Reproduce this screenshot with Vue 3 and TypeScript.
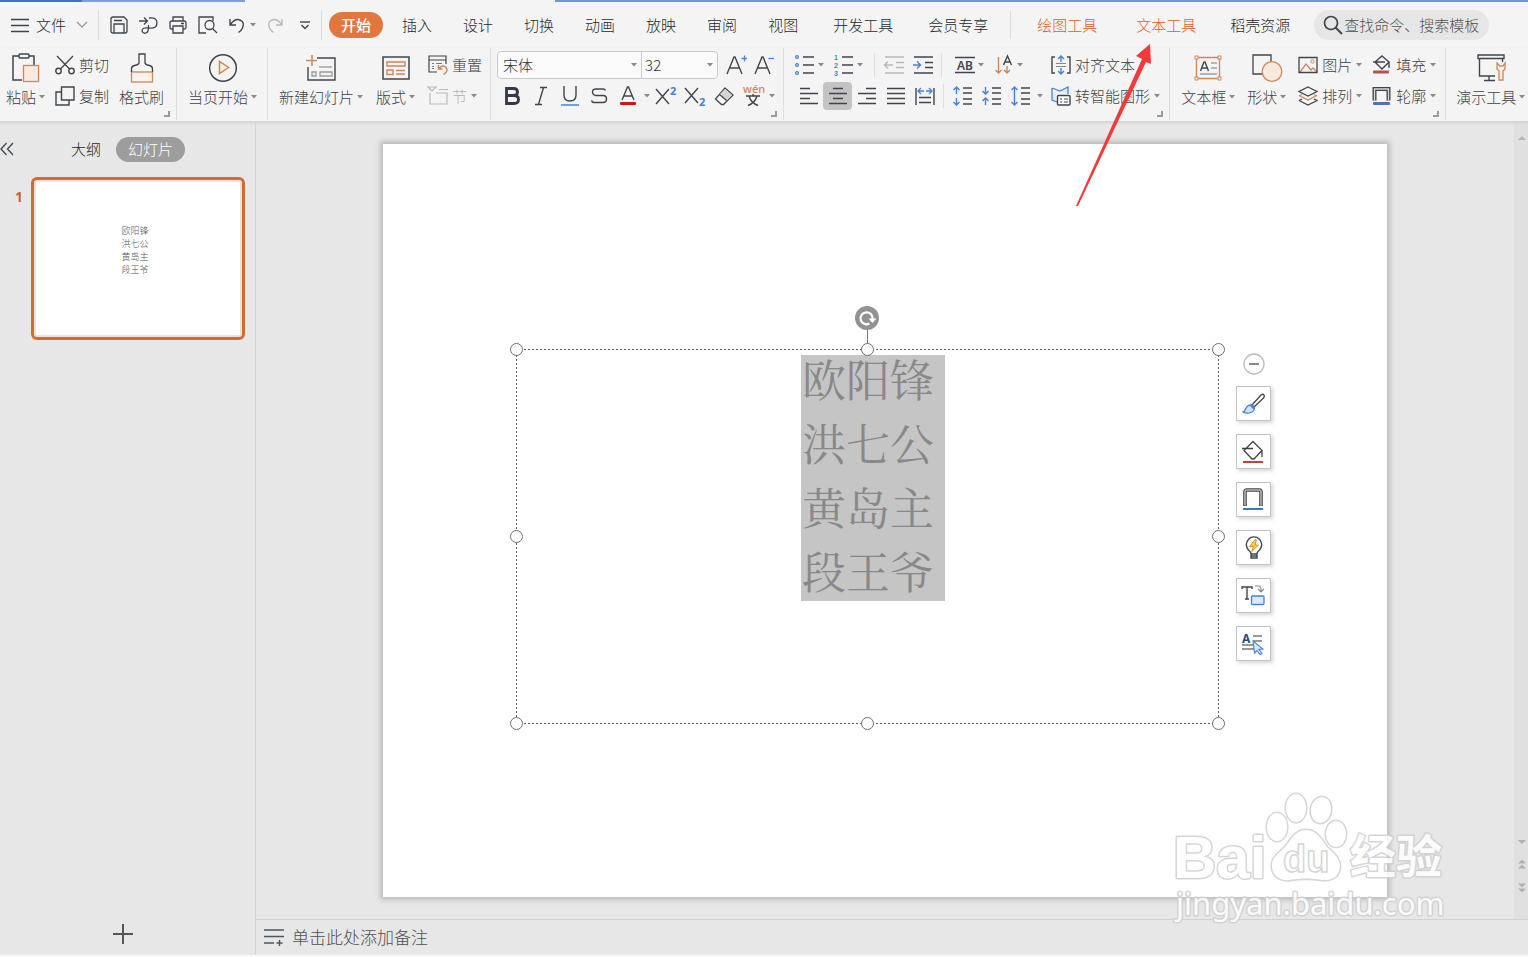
<script setup lang="ts">
import { h } from 'vue'

type IconDef = [number, number, string]

const K = '#40454d'
const O = '#d08658'
const B = '#4583d6'
const G = '#b9b9b9'

const line = (d: string, c = K, w = 1.5, fill = 'none') =>
  `<path d="${d}" stroke="${c}" stroke-width="${w}" fill="${fill}"/>`
const glyph = (t: string, x: number, y: number, size: number, c = K, extra = '') =>
  `<text x="${x}" y="${y}" font-size="${size}" fill="${c}" font-family="Noto Sans, Noto Sans CJK SC, sans-serif" ${extra}>${t}</text>`
const digit = (t: string, y: number) =>
  `<text x="0" y="${y}" font-size="7" font-weight="700" fill="${B}" font-family="Liberation Sans, sans-serif">${t}</text>`

const icons: Record<string, IconDef> = {
  menu: [18, 18, line('M0 3.500h18M0 9.500h18M0 15.500h18', K, 1.3)],
  chevron: [12, 8, line('M1 1l5 5 5-5', '#999', 1.3)],
  save: [18, 18, line('M3 1h11l3 3v11q0 2-2 2H3q-2 0-2-2V3q0-2 2-2zM4 17V8h10v9M4 4.5h8', K, 1.3)],
  share: [19, 18, line('M0 5h8M5 1.5L8.5 5 5 8.5M10 2q8-1 8 5t-8 5q-7-1-7 3 1 3 4 2 3-1 2.500-8', K, 1.3)],
  print: [18, 18, line('M4 5V1h10v4M4 13H2.500Q1 13 1 11.500V7q0-2 2-2h12q2 0 2 2v4.500q0 1.500-1.500 1.500H14M4 10h10v7H4zM12 7.500h3', K, 1.3)],
  preview: [20, 18, line('M8 17H1V1h14v4', K, 1.3) + `<circle cx="11.500" cy="9" r="4.500" stroke="${K}" stroke-width="1.300" fill="none"/>` + line('M14.500 12.500l4.500 4.500', K, 1.3)],
  undo: [16, 16, line('M1 2v6h6M1.500 7.500Q6 1 11 3t2.500 8q-1 2.500-4 4.500', K, 1.4)],
  redo: [16, 16, line('M15 2v6H9M14.500 7.500Q10 1 5 3T2.500 11q1 2.500 4 4.500', G, 1.4)],
  more: [10, 9, line('M0 1h10', K, 1.4) + line('M1.500 4l3.500 3.500L8.500 4', K, 1.4)],
  search: [20, 20, `<circle cx="8" cy="8" r="6.500" stroke="${K}" stroke-width="1.700" fill="none"/>` + line('M12.500 12.500l6.500 6.500', K, 2)],
  paste: [28, 30, line('M10 27H1V3h6M17 3h5v9', K, 1.5) + `<rect x="7" y="1" width="10" height="4" rx="1" stroke="${K}" stroke-width="1.500" fill="#f4f4f4"/><rect x="11.500" y="12.500" width="15" height="16" fill="#fbe9df" stroke="${O}" stroke-width="1.300"/>`],
  cut: [20, 20, line('M2 1l12.500 13M18 1L5.500 14', K, 1.3) + `<circle cx="3.500" cy="16" r="2.700" fill="none" stroke="${K}" stroke-width="1.400"/><circle cx="16.500" cy="16" r="2.700" fill="none" stroke="${K}" stroke-width="1.400"/>`],
  copy: [20, 20, line('M6.500 6H1v13h13v-5', K, 1.4) + line('M6.500 1H19v13H6.500z', K, 1.4)],
  painter: [24, 30, `<rect x="1.500" y="19" width="21" height="10" fill="#fdf0e8" stroke="${O}" stroke-width="1.300"/>` + line('M1.500 19v-3q0-3 3-3.500 4-.5 4.500-2.500V1h6v9q.5 2 4.500 2.500 3 .5 3 3.500v3', K, 1.3)],
  play: [30, 30, `<circle cx="15" cy="15" r="13.300" fill="none" stroke="${K}" stroke-width="1.500"/>` + line('M11.500 8.500v12l9-6z', O, 1.5, '#fdf0e8')],
  newslide: [30, 28, line('M11 4h18v22H2V13', K, 1.4) + line('M6 1v11M0 6.500h11', O, 1.5) + line('M13 13h13', '#9a9a9a', 1.3) + line('M6 18h4v4H6zM14 18h12v4H14z', '#9a9a9a', 1.3)],
  layout: [28, 24, line('M1 1h26v22H1z', K, 1.5) + line('M5 6h18v4H5zM5 14h6v4.500H5zM14 14.500h9M14 18h9', O, 1.4)],
  reset: [20, 20, line('M9 17H1V1h17v8M1 5h17', K, 1.2) + line('M4 8.500h2M8 8.500h6M4 11.500h2M4 13.500h2', '#777', 1.2) + line('M10.500 10v4h4M11 13.500q4-4.500 7-1t-2.500 7', O, 1.4)],
  section: [20, 20, line('M0 1h8L4 5zM11 3.500h9M2 7v11h17V7H8', G, 1.2)],
  fontup: [20, 20, line('M1 19L8 2h1l7 17M3.500 13h10', K, 1.4) + line('M15.500 3.500H21M18.500 .5v6', B, 1.3)],
  fontdown: [20, 20, line('M1 19L8 2h1l7 17M3.500 13h10', K, 1.4) + line('M14.500 3.500H20', B, 1.3)],
  bold: [16, 20, line('M2.500 2.500h7q4 0 4 3.500t-4 3.500h-7zM2.500 9.500h7.500q4.500 0 4.500 4t-4.500 4h-7.500z', '#333a45', 2.8)],
  italic: [14, 20, line('M6 1.500h7M1 18.500h7M9.500 1.500l-5 17', K, 1.4)],
  underline: [18, 20, line('M3 0v9q0 6 6 6t6-6V0', K, 1.4) + line('M0 19h18', B, 1.5)],
  strike: [18, 18, line('M15.500 3.500Q15 2 13 2H6Q2.500 2 2.500 5t3.500 3.500h7q3.500 0 3.500 3.500T13 15.500H4Q2 15.500 1.500 13.500', K, 1.4)],
  color: [18, 20, line('M3 14L8.500 1h1L15 14M5 10h8', K, 1.4) + '<rect x="1" y="16" width="16" height="3" rx="1" fill="#cc1717"/>'],
  sup: [22, 20, line('M1 3l13 15M14 3L1 18', K, 1.4) + glyph('2', 15, 9, 11, B, 'font-weight="700"')],
  sub: [22, 20, line('M1 2l13 15M14 2L1 17', K, 1.4) + glyph('2', 15, 20, 11, B, 'font-weight="700"')],
  eraser: [20, 20, line('M11 2l8 7-9.500 9.500h-2L1.500 13z', K, 1.3, '#fff') + '<path d="M11 3l7 6-5.500 5.500-7-6z" fill="#d5d5d5"/>' + line('M5.500 8.500l7 6', K, 1.3)],
  pinyin: [20, 22, glyph('wén', 0, 8, 11, O, 'font-weight="500"') + line('M3 11h14M10 9v2M6 11q2 7 9 9.500M14 11q-2 7-9 9.500', K, 1.4)],
  bullets: [20, 20, [2, 10, 18].map(y => `<circle cx="2" cy="${y}" r="1.400" fill="none" stroke="${B}" stroke-width="1.300"/>`).join('') + line('M8 2h11M8 10h11M8 18h11', K, 1.4)],
  numbers: [20, 20, digit('1', 5) + digit('2', 13) + digit('3', 21) + line('M8 2h11M8 10h11M8 18h11', K, 1.4)],
  outdent: [20, 20, line('M1 2h19M12 7.500h8M12 12.500h8M1 18h19M0 10h9M4 6.500L.5 10 4 13.500', G, 1.4)],
  indent: [20, 20, line('M1 2h19M12 7.500h8M12 12.500h8M1 18h19', K, 1.4) + line('M0 10h7M4 6.500L7.500 10 4 13.500', B, 1.4)],
  ab: [20, 18, line('M0 1.500h20M0 16.500h20', K, 1.4) + glyph('AB', 2, 13.5, 12, K, 'font-weight="600"')],
  sort: [18, 20, line('M3.500 2v16M.5 15l3 3 3-3M12 11v7M9 15l3 3 3-3', O, 1.4) + line('M8.500 10L12.500 1l4 9M10 7h5', K, 1.4)],
  left: [18, 18, line('M0 1.500h10M0 6.500h18M0 11.500h10M0 16.500h18', K, 1.4)],
  center: [18, 18, line('M4 1.500h10M0 6.500h18M4 11.500h10M0 16.500h18', K, 1.4)],
  right: [18, 18, line('M8 1.500h10M0 6.500h18M8 11.500h10M0 16.500h18', K, 1.4)],
  justify: [18, 18, line('M0 1.500h18M0 6.500h18M0 11.500h18M0 16.500h18', K, 1.4)],
  spread: [20, 18, line('M1 1v17M19 1v17M4 10.500h12M4 15.500h12', K, 1.4) + line('M3 4h6M11 4h6M6 1L3 4l3 3M14 1l3 3-3 3', B, 1.3)],
  lineup: [20, 20, line('M10 2h9M10 7h9M10 13h9M10 18h9', K, 1.4) + line('M3.500 1v7M.5 4l3-3 3 3M3.500 12v7M.5 16l3 3 3-3', B, 1.4)],
  linedown: [20, 20, line('M10 2h9M10 7h9M10 13h9M10 18h9', K, 1.4) + line('M3.500 1v7M.5 5l3 3 3-3M3.500 12v7M.5 15l3-3 3 3', B, 1.4)],
  spacing: [20, 20, line('M10 2h9M10 7h9M10 13h9M10 18h9', K, 1.4) + line('M3.500 1v18M.5 4l3-3 3 3M.5 16l3 3 3-3', B, 1.4)],
  valign: [20, 20, line('M4 2H1v16h3M16 2h3v16h-3', K, 1.4) + line('M5 8.500h10M5 11.500h10', '#888', 1) + line('M10 1v6M7 4l3-3 3 3M10 13v6M7 16l3 3 3-3', B, 1.4)],
  smart: [20, 20, line('M1 2l8 3 8-4v7M1 2v12l5 2', B, 1.3, '#dfeaf8') + `<rect x="6.500" y="9.500" width="12.500" height="9.500" rx="1" fill="#fff" stroke="${K}" stroke-width="1.400"/>` + line('M9 13h2M9 16h2M13 13h4M13 16h4', K, 1)],
  textbox: [28, 26, line('M2.500 2.500h23v21h-23z', O, 1.3) + [[2.5, 2.5], [25.5, 2.5], [2.5, 23.5], [25.5, 23.5]].map(([x, y]) => `<rect x="${x - 1.5}" y="${y - 1.5}" width="3" height="3" fill="#fff" stroke="${O}"/>`).join('') + line('M6.500 16L10 7h1l3.500 9M8 13h5', K, 1.4) + line('M17 8h6M17 13h6M6 19h17', '#777', 1.2)],
  shapes: [30, 28, line('M1 1h18v19H1z', K, 1.3) + `<circle cx="20" cy="17.500" r="9.800" fill="#f8e9df" stroke="${O}" stroke-width="1.300"/>`],
  picture: [20, 18, line('M2 16l6-8 5 6 2-2 4 4', O, 1.3) + `<circle cx="14.500" cy="5.500" r="1.700" fill="none" stroke="${O}"/>` + line('M1 1.500h18v15H1z', K, 1.3)],
  arrange: [20, 20, line('M1 9.500l9 4.500 9-4.500M1 10l3-1.500M19 10l-3-1.500', O, 1.3) + line('M10 1l9 4.500-9 4.500-9-4.500zM1 14.500l9 4.500 9-4.500-3-1.500M1 14.500L4 13', K, 1.3)],
  fill: [20, 20, line('M10 1l7 6-7 7-7-7zM1 7h12M17 7v6', K, 1.4) + '<rect x="1" y="15.500" width="16" height="3" rx="1" fill="#b8504c"/>'],
  outline: [20, 20, '<path d="M2.500 14.500V3h14v11.500" fill="none" stroke="#40454d" stroke-width="4"/><path d="M2.500 14.500V3h14v11.500" fill="none" stroke="#d8d8d8" stroke-width="1.300"/><rect x="1" y="16" width="17" height="3" rx="1" fill="#4a74b4"/>'],
  tools: [28, 28, line('M1 1h26v3.500H1zM2.500 4.500V22H18M12 22v4.500M7 26.500h11M25.500 4.500V8', K, 1.4) + line('M20 9v6l2 2v9h4v-9l2-2V9l-2 3h-3z', O, 1.3, '#fdf0e8')],
  collapse: [14, 14, line('M6.500 1L1 7l5.500 6M13 1L7.500 7l5.500 6', K, 1.3)],
  plus: [20, 20, line('M10 0v20M0 10h20', '#555', 2)],
  notes: [21, 16, line('M0 1h20M0 7.500h20M0 14h10', '#4b5563', 1.4) + line('M15.500 11v6M12.500 14h6', '#4b5563', 1.4)],
  rotate: [24, 24, '<circle cx="12" cy="12" r="12" fill="#929292"/>' + line('M17.500 13A6 6 0 1 0 14.500 17.500', '#fff', 2.2) + '<path d="M13.500 12.500h8l-4 4.500z" fill="#fff"/>'],
  minus: [22, 22, '<circle cx="11" cy="11" r="10" fill="#fff" stroke="#bbb" stroke-width="1.300"/><path d="M6 11h10" stroke="#8a8a8a" stroke-width="2"/>'],
  brush: [24, 22, line('M10 12L19 2q2-1.500 3 0t-1 3.500l-9 8.500z', K, 1.3, '#fff') + line('M1 19q2-.5 3-4 2-3.500 6-3l2.500 3q-.5 4-5 5-4 .5-6.500-1zM8 12l4 4', B, 1.2, '#cfe1f6')],
  bucket: [24, 24, line('M11 1.500l9 9-8 8.500h-2l-8-8.500zM0 8.500h11M20 10v7', K, 1.3) + '<rect x="1" y="21" width="20" height="2" fill="#c8403a"/>'],
  frame: [24, 24, '<path d="M3 18V4q0-2 2-2h12q2 0 2 2v14" fill="none" stroke="#444" stroke-width="3.600"/><path d="M3 17.500V4q0-2 2-2h12q2 0 2 2v13.500" fill="none" stroke="#b5b5b5" stroke-width="1.600"/><path d="M1 21h20" stroke="#3c79b8" stroke-width="2"/>'],
  bulb: [20, 24, line('M7 18q0-2-2.500-4A7.700 7.700 0 1 1 15.500 14q-2.500 2-2.500 4zM7 18v4h6v-4M7 20h6', K, 1.4) + '<path d="M11 3.500L5.500 10.500H9l-1 5 6.500-6.500h-3.500l1.500-5z" fill="#ffc933" stroke="#c18b1e" stroke-width=".8"/>'],
  convert: [24, 22, line('M0 4V2h10v2M5 2v12M3 14h4', K, 1.4) + line('M13 1h4q2 0 2 5M16 4l3 3 3-3', '#888', 1.1) + `<rect x="9.500" y="11" width="12.500" height="8.500" rx="1" fill="#d9e9fa" stroke="${B}" stroke-width="1.300"/>`],
  pick: [24, 22, glyph('A', 0, 10, 12, '#274b85', 'font-weight="700"') + line('M11 3h9M11 8h9M0 12h12M0 16h12', '#777', 1.4) + line('M11 8l10 8-4 .5 3 4-2 1-3-4-2.500 2.500z', B, 1.1, '#d9e9fa')],
  caret: [6, 4, '<path d="M0 0h6L3 3.500z" fill="#8a8a8a"/>'],
  up: [8, 6, '<path d="M0 5h8L4 1z" fill="#b5b5b5"/>'],
  down: [8, 6, '<path d="M0 1h8L4 5z" fill="#b0b0b0"/>'],
  dup: [8, 10, '<path d="M0 4.500h8L4 .5zM0 9.500h8L4 5.500z" fill="#b0b0b0"/>'],
  ddown: [8, 10, '<path d="M0 .5h8L4 4.500zM0 5.500h8L4 9.500z" fill="#b0b0b0"/>'],
}

const Icon = (p: { n: string }) => {
  const [w, ht, body] = icons[p.n]
  return h('svg', { width: w, height: ht, viewBox: `0 0 ${w} ${ht}`, overflow: 'visible', 'aria-hidden': 'true', innerHTML: body })
}
Icon.props = ['n']

const quick = [
  { n: 'save', t: '保存' }, { n: 'share', t: '输出' }, { n: 'print', t: '打印' }, { n: 'preview', t: '打印预览' },
]
const tabs = ['插入', '设计', '切换', '动画', '放映', '审阅', '视图', '开发工具', '会员专享']
const names = ['欧阳锋', '洪七公', '黄岛主', '段王爷']
const handles = ['nw', 'n', 'ne', 'w', 'e', 'sw', 's', 'se']
const floats = [
  { n: 'brush', t: '样式' }, { n: 'bucket', t: '填充' }, { n: 'frame', t: '轮廓' },
  { n: 'bulb', t: '智能' }, { n: 'convert', t: '转换' }, { n: 'pick', t: '选择' },
]
</script>

<template>
  <div class="app">
    <div class="strip"><i class="s1"></i><i class="s2"></i><i class="s3"></i></div>
    <header class="top">
      <button class="file"><Icon n="menu" /><span>文件</span><Icon n="chevron" /></button>
      <div class="quick">
        <button v-for="q in quick" :key="q.n" :aria-label="q.t"><Icon :n="q.n" /></button>
        <button class="undo" aria-label="撤消"><Icon n="undo" /><Icon n="caret" /></button>
        <button aria-label="恢复"><Icon n="redo" /></button>
        <button class="more" aria-label="更多"><Icon n="more" /></button>
      </div>
      <nav class="tabs">
        <a href="#" class="active">开始</a>
        <a v-for="t in tabs" :key="t" href="#" :class="{ long: t.length > 2 }">{{ t }}</a>
      </nav>
      <nav class="context">
        <a href="#" class="hot">绘图工具</a>
        <a href="#" class="hot">文本工具</a>
        <a href="#" class="store">稻壳资源</a>
      </nav>
      <label class="search"><Icon n="search" /><input type="text" placeholder="查找命令、搜索模板" aria-label="查找命令、搜索模板" /></label>
    </header>

    <section class="ribbon">
      <div class="group clip">
        <button class="big"><span class="pic"><Icon n="paste" /></span><span class="lab">粘贴<Icon n="caret" /></span></button>
        <div class="col">
          <button class="small"><Icon n="cut" />剪切</button>
          <button class="small"><Icon n="copy" />复制</button>
        </div>
        <button class="big"><span class="pic"><Icon n="painter" /></span><span class="lab">格式刷</span></button>
        <i class="corner"></i>
      </div>
      <div class="group show">
        <button class="big"><span class="pic"><Icon n="play" /></span><span class="lab">当页开始<Icon n="caret" /></span></button>
      </div>
      <div class="group slides">
        <button class="big"><span class="pic"><Icon n="newslide" /></span><span class="lab">新建幻灯片<Icon n="caret" /></span></button>
        <button class="big"><span class="pic"><Icon n="layout" /></span><span class="lab">版式<Icon n="caret" /></span></button>
        <div class="col">
          <button class="small"><Icon n="reset" />重置</button>
          <button class="small off"><Icon n="section" />节<Icon n="caret" /></button>
        </div>
      </div>
      <div class="group font">
        <div class="col">
          <div class="row pickers">
            <div class="combo">
              <span class="field family"><select aria-label="字体"><option>宋体</option></select><Icon n="caret" /></span>
              <span class="field size"><select aria-label="字号"><option>32</option></select><Icon n="caret" /></span>
            </div>
            <button aria-label="增大字号"><Icon n="fontup" /></button>
            <button aria-label="减小字号"><Icon n="fontdown" /></button>
          </div>
          <div class="row">
            <button class="cell" aria-label="加粗"><Icon n="bold" /></button>
            <button class="cell" aria-label="倾斜"><Icon n="italic" /></button>
            <button class="cell" aria-label="下划线"><Icon n="underline" /></button>
            <button class="cell" aria-label="删除线"><Icon n="strike" /></button>
            <button class="cell" aria-label="字体颜色"><Icon n="color" /></button>
            <button class="drop" aria-label="更多颜色"><Icon n="caret" /></button>
            <button class="cell" aria-label="上标"><Icon n="sup" /></button>
            <button class="cell" aria-label="下标"><Icon n="sub" /></button>
            <button class="cell" aria-label="清除格式"><Icon n="eraser" /></button>
            <button class="cell" aria-label="拼音"><Icon n="pinyin" /></button>
            <button class="drop" aria-label="更多拼音"><Icon n="caret" /></button>
          </div>
        </div>
        <i class="corner"></i>
      </div>
      <div class="group para">
        <div class="col">
          <div class="row">
            <button class="slim" aria-label="项目符号"><Icon n="bullets" /></button><button class="drop" aria-label="更多项目符号"><Icon n="caret" /></button>
            <button class="slim next" aria-label="编号"><Icon n="numbers" /></button><button class="drop" aria-label="更多编号"><Icon n="caret" /></button>
            <i class="bar wide"></i>
            <button class="cell" aria-label="减少缩进"><Icon n="outdent" /></button>
            <button class="cell" aria-label="增加缩进"><Icon n="indent" /></button>
            <i class="bar"></i>
            <button class="slim next" aria-label="文字宽度"><Icon n="ab" /></button><button class="drop" aria-label="更多宽度"><Icon n="caret" /></button>
            <button class="slim next" aria-label="文字方向"><Icon n="sort" /></button><button class="drop" aria-label="更多方向"><Icon n="caret" /></button>
          </div>
          <div class="row">
            <button class="cell" aria-label="左对齐"><Icon n="left" /></button>
            <button class="cell on" aria-label="居中"><Icon n="center" /></button>
            <button class="cell" aria-label="右对齐"><Icon n="right" /></button>
            <button class="cell" aria-label="两端对齐"><Icon n="justify" /></button>
            <button class="cell" aria-label="分散对齐"><Icon n="spread" /></button>
            <i class="bar"></i>
            <button class="cell" aria-label="增加段距"><Icon n="lineup" /></button>
            <button class="cell" aria-label="减少段距"><Icon n="linedown" /></button>
            <button class="cell" aria-label="行距"><Icon n="spacing" /></button>
            <button class="drop" aria-label="更多行距"><Icon n="caret" /></button>
          </div>
        </div>
        <div class="col">
          <button class="small"><Icon n="valign" />对齐文本</button>
          <button class="small"><Icon n="smart" />转智能图形<Icon n="caret" /></button>
        </div>
        <i class="corner"></i>
      </div>
      <div class="group draw">
        <button class="big"><span class="pic"><Icon n="textbox" /></span><span class="lab">文本框<Icon n="caret" /></span></button>
        <button class="big"><span class="pic"><Icon n="shapes" /></span><span class="lab">形状<Icon n="caret" /></span></button>
        <div class="pair">
          <div class="col">
            <button class="small"><Icon n="picture" />图片<Icon n="caret" /></button>
            <button class="small"><Icon n="arrange" />排列<Icon n="caret" /></button>
          </div>
          <div class="col">
            <button class="small"><Icon n="fill" />填充<Icon n="caret" /></button>
            <button class="small"><Icon n="outline" />轮廓<Icon n="caret" /></button>
          </div>
        </div>
        <i class="corner"></i>
      </div>
      <div class="group present">
        <button class="big"><span class="pic"><Icon n="tools" /></span><span class="lab">演示工具<Icon n="caret" /></span></button>
      </div>
    </section>

    <div class="body">
      <aside class="side">
        <div class="switch">
          <button class="fold" aria-label="收起"><Icon n="collapse" /></button>
          <button class="mode">大纲</button>
          <button class="mode sel">幻灯片</button>
        </div>
        <div class="thumbrow">
          <span class="num">1</span>
          <div class="thumb"><p v-for="n in names" :key="n">{{ n }}</p></div>
        </div>
        <button class="add" aria-label="新建幻灯片"><Icon n="plus" /></button>
      </aside>

      <main class="main">
        <div class="work">
          <div class="stage">
            <div class="slide">
              <div class="box">
                <svg class="edge" aria-hidden="true"><rect width="100%" height="100%" fill="none" stroke="#5c5c5c" stroke-dasharray="2 2" shape-rendering="crispEdges" /></svg>
                <div class="picked"><p v-for="n in names" :key="n">{{ n }}</p></div>
                <i class="stem"></i>
                <span class="rot"><Icon n="rotate" /></span>
                <i v-for="x in handles" :key="x" class="handle" :class="x"></i>
              </div>
              <div class="floats">
                <button class="fold-tools" aria-label="收起工具"><Icon n="minus" /></button>
                <button v-for="f in floats" :key="f.n" class="float" :aria-label="f.t"><Icon :n="f.n" /></button>
              </div>
            </div>
          </div>
          <div class="scroll">
            <Icon n="up" />
            <div class="ends"><Icon n="down" /><Icon n="dup" /><Icon n="ddown" /></div>
          </div>
        </div>
        <label class="notes"><Icon n="notes" /><input type="text" placeholder="单击此处添加备注" aria-label="备注" /></label>
      </main>
    </div>

    <svg class="arrow" width="80" height="166" viewBox="0 0 80 166" aria-hidden="true">
      <path d="M75 1L61 13l6 3L1 163l2 0L71 19l5 2z" fill="#f23a3a" />
    </svg>

    <svg class="mark" width="290" height="145" viewBox="0 0 290 145" aria-hidden="true">
      <g fill="#fff" stroke="#cfcfcf" stroke-width="3" paint-order="stroke" stroke-linejoin="round">
        <text class="latin" x="9" y="98" font-size="60">Bai</text>
        <ellipse cx="113" cy="47" rx="10" ry="14" />
        <ellipse cx="132" cy="28" rx="10" ry="14" />
        <ellipse cx="157" cy="30" rx="10" ry="13" transform="rotate(10 157 30)" />
        <ellipse cx="172" cy="54" rx="10" ry="13" />
        <path d="M142 50c-11 0-15 10-21 17-7 7-14 11-13 20 1 10 9 14 18 13 12-2 20-2 32 0 10 1 17-3 18-13 0-9-6-13-13-20-6-8-10-17-21-17z" />
        <text class="hanzi" x="186" y="93" font-size="46">经验</text>
        <text class="url" x="12" y="135" font-size="31">jingyan.baidu.com</text>
      </g>
      <text class="latin" x="119" y="92" font-size="38" fill="#fff" stroke="#cfcfcf" stroke-width="1.500">du</text>
    </svg>
  </div>
</template>

<style>
body { margin: 0; }
</style>

<style scoped>
.app {
  position: relative;
  display: flex;
  flex-direction: column;
  min-height: 100vh;
  box-sizing: border-box;
  border-bottom: 2px solid #f8f8f8;
  background: #e7e7e7;
  color: #404040;
  font: 300 15px/20px "Noto Sans CJK SC", sans-serif;
  overflow: hidden;
}
button {
  display: flex;
  align-items: center;
  justify-content: center;
  flex: none;
  margin: 0;
  padding: 0;
  border: 0;
  background: none;
  color: inherit;
  font: inherit;
  white-space: nowrap;
}
a { color: inherit; text-decoration: none; white-space: nowrap; }
svg { flex: none; display: block; }
p { margin: 0; }
input { border: 0; padding: 0; background: none; font: inherit; color: inherit; outline: 0; min-width: 0; }
input::placeholder { color: #505050; opacity: 1; }

.strip { display: flex; height: 2px; background: #f4f4f4; }
.s1 { flex: 0 0 82px; background: #4672bd; }
.s2 { flex: 0 0 163px; background: #7f9fdb; }
.s3 { flex: 1; margin-left: 310px; background: #7097d8; }

.top { display: flex; align-items: center; height: 46px; background: #f4f4f4; color: #282828; }
.file { gap: 7px; padding: 0 10px 0 11px; height: 30px; border-right: 1px solid #dcdcdc; }
.file svg:last-child { margin-left: 3px; }
.quick { display: flex; align-items: center; gap: 11px; height: 30px; padding: 0 11px; border-right: 1px solid #dcdcdc; }
.undo { gap: 5px; }
.more { margin-left: 6px; }
.tabs { display: flex; align-items: center; gap: 31px; padding-left: 7px; }
.active { margin-right: -12px; padding: 3px 12px; border-radius: 13px; background: #e1763f; color: #fff; font-weight: 500; }
.long { margin-left: 4px; }
.context { display: flex; align-items: center; gap: 39px; height: 28px; margin-left: 22px; padding-left: 26px; border-left: 1px solid #dcdcdc; }
.hot { color: #dc5f25; }
.store { margin-left: -5px; }
.search { display: flex; align-items: center; gap: 1px; flex: 0 1 175px; min-width: 0; box-sizing: border-box; margin-left: 24px; padding-left: 9px; height: 30px; border-radius: 15px; background: #e6e6e6; }
.search input { flex: 1; width: 0; }

.ribbon { display: flex; height: 73px; background: #f4f4f4; border-bottom: 1px solid #d6d6d6; box-shadow: 0 1px 2px #d2d2d2; z-index: 1; }
.group { position: relative; display: flex; flex: none; box-sizing: border-box; height: 72px; border-right: 1px solid #dfdfdf; }
.clip { gap: 10px; padding: 0 12px 0 6px; }
.show { padding: 0 10px 0 11px; }
.slides { gap: 13px; padding: 0 8px 0 11px; }
.font { padding: 0 7px 0 6px; }
.para { gap: 7px; padding: 0 9px 0 10px; }
.draw { gap: 12px; padding: 0 9px 0 11px; }
.pair { display: flex; gap: 10px; }
.present { padding-left: 10px; border: 0; }
.corner { position: absolute; right: 6px; bottom: 3px; width: 4px; height: 4px; border: solid #9a9a9a; border-width: 0 2px 2px 0; }
.big { flex-direction: column; justify-content: flex-start; padding-top: 4px; }
.pic { display: flex; align-items: center; justify-content: center; height: 32px; }
.lab { display: flex; align-items: center; gap: 3px; height: 26px; }
.col { display: flex; flex-direction: column; padding-top: 1px; }
.row { display: flex; align-items: center; height: 31px; }
.small { justify-content: flex-start; gap: 4px; height: 31px; }
.off { color: #b0b0b0; }
.cell { width: 29px; height: 28px; }
.slim { width: 22px; height: 28px; }
.drop { width: 9px; height: 28px; }
.next { margin-left: 8px; }
.on { border-radius: 4px; background: #c3c3c3; }
.bar { width: 1px; height: 24px; margin: 0 4px; background: #dedede; }
.wide { margin-left: 10px; }
.pickers { gap: 8px; }
.combo { display: flex; box-sizing: border-box; width: 221px; height: 28px; border: 1px solid #c9c9c9; border-radius: 4px; background: #fafafa; }
.field { display: flex; align-items: center; padding: 0 4px 0 5px; }
.family { flex: 1; border-right: 1px solid #c9c9c9; }
.size { width: 68px; padding-left: 3px; }
.field select { flex: 1; min-width: 0; margin: 0; padding: 0; border: 0; appearance: none; background: none; color: #303030; font: inherit; }

.body { display: flex; flex: 1; }
.side { display: flex; flex-direction: column; flex: 0 0 255px; border-right: 1px solid #d4d4d4; }
.switch { display: flex; align-items: center; height: 26px; padding-top: 14px; }
.fold { width: 14px; height: 20px; }
.mode { margin-left: 57px; height: 25px; color: #282828; }
.sel { margin-left: 15px; padding: 0 12px; border-radius: 13px; background: #9d9d9d; color: #fff; }
.thumbrow { display: flex; padding: 15px 10px 0 0; }
.num { flex: 0 0 31px; padding: 10px 0 0 15px; box-sizing: border-box; color: #c9642c; font: 700 14px/20px "Noto Sans", sans-serif; }
.thumb {
  flex: 1;
  box-sizing: border-box;
  aspect-ratio: 214 / 163;
  padding: 44px 6px 0 0;
  border: 3px solid #cb6d37;
  border-radius: 6px;
  box-shadow: inset 0 0 0 2px #f5ddd0;
  background: #fff;
  color: #555;
  font-size: 9px;
  line-height: 13px;
  text-align: center;
}
.add { align-self: center; height: 22px; margin: auto 10px 10px 0; }

.main { display: flex; flex-direction: column; flex: 1; min-width: 0; }
.work { display: flex; flex: 1; }
.stage { flex: 1; padding: 22px 127px 21px; }
.slide { position: relative; aspect-ratio: 4 / 3; background: #fff; box-shadow: 0 0 5px 3px #bdbdbd; }
.box { position: absolute; left: 133px; top: 205px; width: 702px; height: 374px; }
.edge { position: absolute; inset: 0; width: 100%; height: 100%; overflow: visible; }
.picked { position: absolute; left: 285px; top: 6px; width: 143px; padding: 0 0 8px 1px; background: #c5c5c5; color: #888; font: 400 44px/46px "Noto Serif CJK SC", "Noto Sans CJK SC", serif; }
.picked p + p { margin-top: 18px; }
.stem { position: absolute; left: 50%; top: -20px; width: 1px; height: 20px; background: #777; }
.rot { position: absolute; left: 50%; top: -43px; margin-left: -12px; }
.handle { position: absolute; width: 11px; height: 11px; margin: -6px; border: 1px solid #6e6e6e; border-radius: 50%; background: #fff; }
.nw, .n, .ne { top: 0; }
.w, .e { top: 50%; }
.sw, .s, .se { top: 100%; }
.nw, .w, .sw { left: 0; }
.n, .s { left: 50%; }
.ne, .e, .se { left: 100%; }
.floats { position: absolute; left: 853px; top: 209px; display: flex; flex-direction: column; align-items: center; gap: 13px; }
.fold-tools { margin-bottom: -2px; }
.float { box-sizing: border-box; width: 35px; height: 35px; border: 1px solid #c4c4c4; background: #fff; box-shadow: 2px 2px 4px #d5d5d5; }
.scroll { display: flex; flex-direction: column; align-items: flex-end; justify-content: space-between; box-sizing: border-box; width: 14px; padding: 13px 2px 26px 0; background: #e0e0e0; }
.ends { display: flex; flex-direction: column; gap: 14px; }
.notes { display: flex; align-items: center; gap: 7px; box-sizing: border-box; height: 36px; padding: 0 0 2px 8px; border-top: 1px solid #d2d2d2; font-size: 17px; }
.notes input { flex: 1; }

.arrow { position: absolute; left: 1075px; top: 43px; z-index: 2; }
.mark { position: absolute; right: 74px; bottom: 30px; z-index: 2; opacity: .85; }
.latin { font-family: "Liberation Sans", sans-serif; font-weight: 700; }
.hanzi { font-family: "Noto Sans CJK SC", sans-serif; font-weight: 700; }
.url { font-family: "Noto Sans", sans-serif; font-weight: 400; }
</style>
